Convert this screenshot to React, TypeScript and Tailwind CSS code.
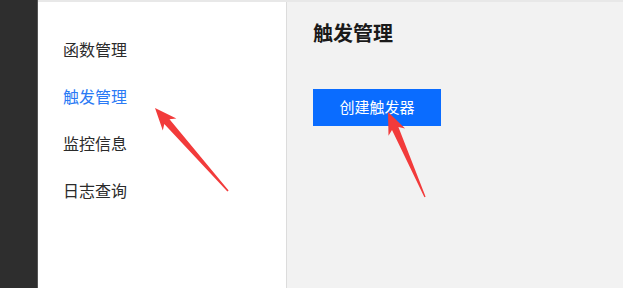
export default function App() {
  const font = { fontFamily: '"Noto Sans CJK SC", "Noto Sans", sans-serif' };
  return (
    <div className="relative flex h-[288px] w-[623px] overflow-hidden" style={font}>
      <div className="w-[38px] shrink-0 bg-[#2e2e2e] border-r border-[#555]" />
      <div className="flex flex-1 border-t-2 border-[#e8e8e8]">
        <div className="w-[249px] shrink-0 bg-white border-r border-[#dcdcdc] pt-[23px] pl-[25px]">
          {["函数管理", "触发管理", "监控信息", "日志查询"].map((t, i) => (
            <div
              key={t}
              className={`flex h-[47px] items-center text-[16px] ${i === 1 ? "text-[#2a7af5]" : "text-[#2b2b2b]"}`}
            >
              {t}
            </div>
          ))}
        </div>
        <div className="flex-1 bg-[#f2f2f2] pl-[26px] pt-[17px]">
          <div className="text-[20px] font-bold leading-[28px] text-[#1a1a1a]">触发管理</div>
          <button className="mt-[42px] flex h-[37px] w-[128px] items-center justify-center bg-[#0a6cff] text-[15px] text-white">
            创建触发器
          </button>
        </div>
      </div>
      <svg className="pointer-events-none absolute left-0 top-0" width="623" height="288" viewBox="0 0 623 288">
        <polygon
          points="155,108 176.4,118.6 169.5,119.3 228.6,190.6 227.4,191.4 164.3,123.9 162.8,130.6"
          fill="#f23b3b"
        />
        <polygon
          points="388,112 405.1,128.6 398.4,127.1 425.6,196.8 424.4,197.2 392,129.9 388.5,135.8"
          fill="#f23b3b"
        />
      </svg>
    </div>
  );
}
